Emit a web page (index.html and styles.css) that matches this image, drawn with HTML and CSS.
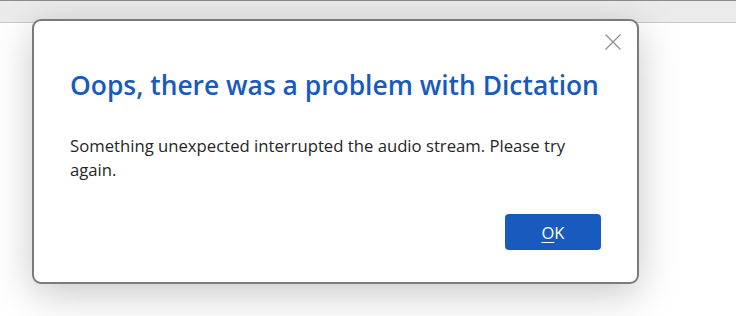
FILE: index.html
```html
<!DOCTYPE html>
<html>
<head>
<meta charset="utf-8">
<link rel="stylesheet" href="styles.css">
</head>
<body>
<div class="app">
  <div class="topbar"></div>
  <div class="canvas"></div>
</div>
<div class="dialog" role="dialog">
  <button class="close" aria-label="Close">
    <svg width="16" height="16" viewBox="0 0 16 16"><path d="M0.5 0.5 L15.5 15.5 M15.5 0.5 L0.5 15.5" stroke="#8a8a8a" stroke-width="1.1" fill="none"/></svg>
  </button>
  <h1 class="title">Oops, there was a problem with Dictation</h1>
  <p class="message">Something unexpected interrupted the audio stream. Please try again.</p>
  <div class="actions">
    <button class="ok"><u>O</u>K</button>
  </div>
</div>
</body>
</html>
```
FILE: styles.css
```css
html, body {
  margin: 0;
  padding: 0;
  width: 736px;
  height: 316px;
  overflow: hidden;
  background: #ffffff;
  font-family: "Open Sans", "Noto Sans", sans-serif;
}
.app {
  display: flex;
  flex-direction: column;
  height: 316px;
}
.topbar {
  height: 21px;
  border-top: 1px solid #8c8c8c;
  border-bottom: 1px solid #c9c9c9;
  background: #ebebeb;
}
.canvas {
  flex: 1;
  background: #ffffff;
}
.dialog {
  position: absolute;
  left: 32px;
  top: 19px;
  width: 603px;
  height: 261px;
  border: 2px solid #7b7b7b;
  border-radius: 9px;
  background: #ffffff;
  box-shadow: 0 10px 40px rgba(0, 0, 0, 0.22);
  box-sizing: content-box;
  padding: 0;
}
.close {
  position: absolute;
  right: 16px;
  top: 13px;
  width: 16px;
  height: 16px;
  padding: 0;
  border: 0;
  background: transparent;
  display: block;
}
.close svg { display: block; }
.title {
  margin: 47px 0 0 36px;
  font-size: 26.4px;
  font-weight: 600;
  color: #185abd;
  line-height: 34px;
  letter-spacing: 0;
}
.message {
  margin: 32px 57px 0 36px;
  font-size: 16.7px;
  line-height: 24px;
  color: #262626;
}
.actions {
  display: flex;
  justify-content: flex-end;
  margin: 32px 36px 0 0;
}
.ok {
  width: 96px;
  height: 36px;
  border: 0;
  border-radius: 4px;
  background: #185abd;
  color: #ffffff;
  font-family: inherit;
  font-size: 16.5px;
  padding: 0;
}
.ok u { text-underline-offset: 3px; }
```
